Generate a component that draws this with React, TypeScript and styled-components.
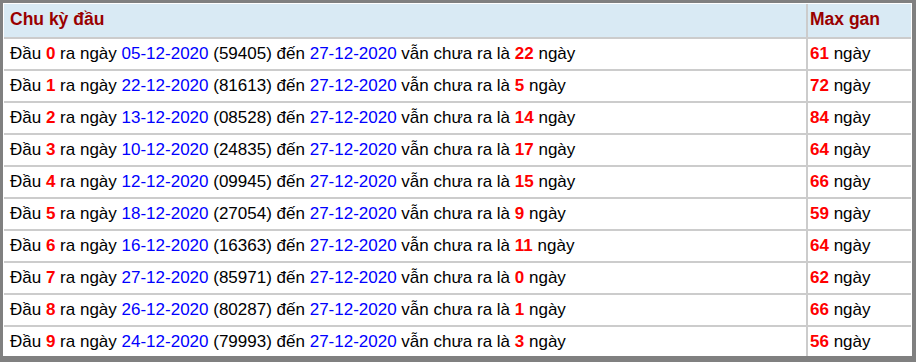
import styled, { createGlobalStyle } from 'styled-components';

const GlobalStyle = createGlobalStyle`
  html, body {
    margin: 0;
    padding: 0;
    background: #ffffff;
  }
  body {
    font-family: 'Liberation Sans', Arial, sans-serif;
  }
`;

const Frame = styled.div`
  box-sizing: border-box;
  width: 916px;
  height: 362px;
  border-style: solid;
  border-color: #808080;
  border-width: 3px 4px 6px 3px;
  padding: 1px;
  background: #ffffff;
  overflow: hidden;
`;

const Table = styled.table`
  width: 100%;
  border-collapse: collapse;
  font-size: 17px;
  color: #000000;
`;

const HeadCell = styled.th<{ $narrow?: boolean }>`
  height: 31px;
  padding: 0 ${(p) => (p.$narrow ? '2px' : '6px')};
  padding-bottom: 2px;
  background: #d9eaf4;
  color: #990000;
  font-size: 17.5px;
  font-weight: bold;
  text-align: left;
  border-bottom: 2px solid #cccccc;
  border-left: ${(p) => (p.$narrow ? '2px solid #cccccc' : 'none')};
  width: ${(p) => (p.$narrow ? '99px' : 'auto')};
`;

const Cell = styled.td<{ $narrow?: boolean }>`
  height: 30px;
  padding: 0 ${(p) => (p.$narrow ? '2px' : '6px')};
  white-space: nowrap;
  border-bottom: 2px solid #cccccc;
  border-left: ${(p) => (p.$narrow ? '2px solid #cccccc' : 'none')};

  tr:last-child > & {
    border-bottom: none;
  }
`;

const Num = styled.b`
  color: #ff0000;
`;

const Date = styled.span`
  color: #0000ff;
`;

const rows = [
  { d: 0, from: '05-12-2020', code: '59405', days: 22, max: 61 },
  { d: 1, from: '22-12-2020', code: '81613', days: 5, max: 72 },
  { d: 2, from: '13-12-2020', code: '08528', days: 14, max: 84 },
  { d: 3, from: '10-12-2020', code: '24835', days: 17, max: 64 },
  { d: 4, from: '12-12-2020', code: '09945', days: 15, max: 66 },
  { d: 5, from: '18-12-2020', code: '27054', days: 9, max: 59 },
  { d: 6, from: '16-12-2020', code: '16363', days: 11, max: 64 },
  { d: 7, from: '27-12-2020', code: '85971', days: 0, max: 62 },
  { d: 8, from: '26-12-2020', code: '80287', days: 1, max: 66 },
  { d: 9, from: '24-12-2020', code: '79993', days: 3, max: 56 },
];

const App = () => {
  return (
    <>
      <GlobalStyle />
      <Frame>
        <Table>
          <thead>
            <tr>
              <HeadCell>Chu kỳ đầu</HeadCell>
              <HeadCell $narrow>Max gan</HeadCell>
            </tr>
          </thead>
          <tbody>
            {rows.map((r) => (
              <tr key={r.d}>
                <Cell>
                  Đầu <Num>{r.d}</Num> ra ngày <Date>{r.from}</Date> ({r.code}) đến{' '}
                  <Date>27-12-2020</Date> vẫn chưa ra là <Num>{r.days}</Num> ngày
                </Cell>
                <Cell $narrow>
                  <Num>{r.max}</Num> ngày
                </Cell>
              </tr>
            ))}
          </tbody>
        </Table>
      </Frame>
    </>
  );
};

export default App;
